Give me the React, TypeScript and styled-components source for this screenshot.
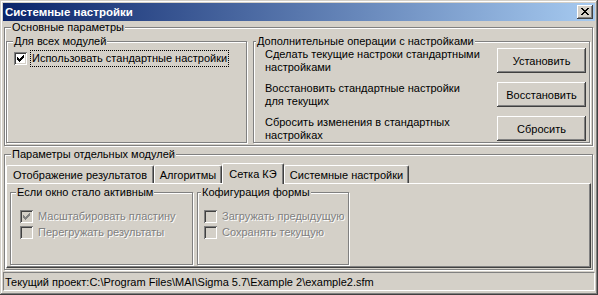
import React from "react";
import styled, { createGlobalStyle } from "styled-components";

const C = {
  face: "#D4D0C8",
  shadow: "#808080",
  dark: "#404040",
  light: "#FFFFFF",
};

const GlobalStyle = createGlobalStyle`
  html, body { margin: 0; padding: 0; background: #ffffff; }
  body { font-family: "Liberation Sans", Arial, sans-serif; font-size: 11px; color: #000; }
  * { box-sizing: border-box; }
`;

const Window = styled.div`
  width: 598px;
  height: 295px;
  padding: 3px;
  background: ${C.face};
  box-shadow: inset -1px -1px ${C.dark}, inset 1px 1px ${C.face},
    inset -2px -2px ${C.shadow}, inset 2px 2px ${C.light};
  display: flex;
  flex-direction: column;
`;

const TitleBar = styled.div`
  height: 18px;
  flex: none;
  display: flex;
  align-items: center;
  justify-content: space-between;
  padding: 0 2px 0 2px;
  background: linear-gradient(to right, #0a246a, #a6caf0);
`;

const TitleText = styled.span`
  color: #fff;
  font-weight: bold;
  font-size: 11.5px;
  line-height: 14px;
  white-space: nowrap;
`;

const CloseButton = styled.div`
  width: 16px;
  height: 14px;
  background: ${C.face};
  box-shadow: inset -1px -1px ${C.dark}, inset 1px 1px ${C.light},
    inset -2px -2px ${C.shadow}, inset 2px 2px ${C.face};
  svg { display: block; }
`;

const Body = styled.div`
  flex: 1;
  display: flex;
  flex-direction: column;
`;

const GroupBox = styled.div<{ $w?: number; $h: number; $mt: number; $ml?: number; $mr?: number }>`
  ${(p) => (p.$w ? `width: ${p.$w}px;` : "")}
  height: ${(p) => p.$h}px;
  margin: ${(p) => p.$mt}px ${(p) => p.$mr ?? 0}px 0 ${(p) => p.$ml ?? 0}px;
  flex: none;
  border: 1px solid ${C.shadow};
  box-shadow: inset 1px 1px ${C.light}, 1px 1px ${C.light};
  display: flex;
  flex-direction: column;
`;

const Legend = styled.div<{ $indent: number }>`
  align-self: flex-start;
  margin: -7px 0 0 ${(p) => p.$indent}px;
  padding: 0 1px;
  height: 13px;
  line-height: 13px;
  background: ${C.face};
  white-space: nowrap;
`;

const Row = styled.div<{ $mt?: number; $ml?: number }>`
  display: flex;
  margin: ${(p) => p.$mt ?? 0}px 0 0 ${(p) => p.$ml ?? 0}px;
`;

const CheckRow = styled.div<{ $mt?: number; $ml: number; $h: number }>`
  display: flex;
  align-items: center;
  height: ${(p) => p.$h}px;
  margin: ${(p) => p.$mt ?? 0}px 0 0 ${(p) => p.$ml}px;
`;

const Box = styled.span<{ $disabled?: boolean }>`
  width: 13px;
  height: 13px;
  flex: none;
  background: ${(p) => (p.$disabled ? C.face : C.light)};
  box-shadow: inset 1px 1px ${C.shadow}, inset -1px -1px ${C.light},
    inset 2px 2px ${C.dark}, inset -2px -2px ${C.face};
  svg { display: block; }
`;

const FocusLabel = styled.span`
  margin-left: 3px;
  padding: 0 1px;
  border: 1px dotted #000;
  line-height: 15px;
  white-space: nowrap;
`;

const DisabledLabel = styled.span`
  margin-left: 5px;
  color: ${C.shadow};
  text-shadow: 1px 1px ${C.light};
  line-height: 14px;
  white-space: nowrap;
`;

const OpRow = styled.div<{ $mt: number }>`
  display: flex;
  align-items: center;
  justify-content: space-between;
  height: 25px;
  margin-top: ${(p) => p.$mt}px;
  padding: 0 3px 0 11px;
`;

const OpText = styled.div`
  line-height: 13px;
  white-space: nowrap;
`;

const Button = styled.div`
  width: 89px;
  height: 25px;
  flex: none;
  display: flex;
  align-items: center;
  justify-content: center;
  background: ${C.face};
  box-shadow: inset -1px -1px ${C.dark}, inset 1px 1px ${C.light},
    inset -2px -2px ${C.shadow}, inset 2px 2px ${C.face};
  white-space: nowrap;
`;

const TabStrip = styled.div`
  display: flex;
  align-items: flex-end;
  height: 22px;
  margin-left: 1px;
`;

const Tab = styled.div<{ $w: number; $active?: boolean }>`
  width: ${(p) => p.$w}px;
  height: ${(p) => (p.$active ? 21 : 18)}px;
  margin-bottom: ${(p) => (p.$active ? -1 : 0)}px;
  position: relative;
  z-index: ${(p) => (p.$active ? 1 : 0)};
  flex: none;
  display: flex;
  align-items: center;
  justify-content: center;
  background: ${C.face};
  border-top: 1px solid ${C.light};
  border-left: 1px solid ${C.light};
  border-right: 1px solid ${C.dark};
  border-radius: 2px 2px 0 0;
  box-shadow: inset -1px 0 ${C.shadow};
  white-space: nowrap;
  line-height: 14px;
`;

const TabPanel = styled.div`
  width: 585px;
  height: 85px;
  margin-left: 1px;
  border-top: 1px solid ${C.light};
  border-left: 1px solid ${C.light};
  border-right: 1px solid ${C.dark};
  border-bottom: 1px solid ${C.dark};
  box-shadow: inset -1px -1px ${C.shadow};
  display: flex;
  padding-left: 3px;
`;

const StatusBar = styled.div`
  height: 19px;
  margin-top: 2px;
  flex: none;
  display: flex;
  align-items: center;
  padding: 1px 0 0 1px;
  border-top: 1px solid ${C.shadow};
  border-left: 1px solid ${C.shadow};
  border-bottom: 1px solid ${C.light};
  border-right: 1px solid ${C.light};
  white-space: nowrap;
`;

const xPixels: [number, number, number][] = [
  [0, 0, 2], [6, 0, 2],
  [1, 1, 2], [5, 1, 2],
  [2, 2, 4],
  [3, 3, 2],
  [2, 4, 4],
  [1, 5, 2], [5, 5, 2],
  [0, 6, 2], [6, 6, 2],
];
const xPath = xPixels.map(([x, y, w]) => `M${x + 4} ${y + 3}h${w}v1h-${w}z`).join("");

const checkCols: [number, number][] = [
  [3, 5], [4, 6], [5, 7], [6, 6], [7, 5], [8, 4], [9, 3],
];
const checkPath = checkCols.map(([x, y]) => `M${x} ${y}h1v3h-1z`).join("");

const CloseGlyph = () => (
  <svg width="16" height="14" viewBox="0 0 16 14" shapeRendering="crispEdges">
    <path d={xPath} fill="#000" />
  </svg>
);

const Check = ({ checked, disabled }: { checked?: boolean; disabled?: boolean }) => (
  <Box $disabled={disabled}>
    {checked && (
      <svg width="13" height="13" viewBox="0 0 13 13" shapeRendering="crispEdges">
        <path d={checkPath} fill={disabled ? C.shadow : "#000"} />
      </svg>
    )}
  </Box>
);

const ops = [
  { lines: ["Сделать текущие настроки стандартными", "настройками"], button: "Установить" },
  { lines: ["Восстановить стандартные настройки", "для текущих"], button: "Восстановить" },
  { lines: ["Сбросить изменения в стандартных", "настройках"], button: "Сбросить" },
];

const tabs = [
  { label: "Отображение результатов", w: 148 },
  { label: "Алгоритмы", w: 68 },
  { label: "Сетка КЭ", w: 62, active: true },
  { label: "Системные настройки", w: 125 },
];

export default function App() {
  return (
    <>
      <GlobalStyle />
      <Window>
        <TitleBar>
          <TitleText>Системные настройки</TitleText>
          <CloseButton>
            <CloseGlyph />
          </CloseButton>
        </TitleBar>
        <Body>
          <GroupBox $h={119} $mt={6} $ml={1} $mr={2}>
            <Legend $indent={6}>Основные параметры</Legend>
            <Row $ml={1}>
              <GroupBox $w={241} $h={102} $mt={7}>
                <Legend $indent={6}>Для всех модулей</Legend>
                <CheckRow $mt={2} $ml={7} $h={17}>
                  <Check checked />
                  <FocusLabel>Использовать стандартные настройки</FocusLabel>
                </CheckRow>
              </GroupBox>
              <GroupBox $w={337} $h={102} $mt={7} $ml={6}>
                <Legend $indent={2}>Дополнительные операции с настройками</Legend>
                {ops.map((op, i) => (
                  <OpRow key={op.button} $mt={i === 0 ? 0 : 9}>
                    <OpText>
                      {op.lines.map((l) => (
                        <div key={l}>{l}</div>
                      ))}
                    </OpText>
                    <Button>{op.button}</Button>
                  </OpRow>
                ))}
              </GroupBox>
            </Row>
          </GroupBox>

          <GroupBox $h={116} $mt={8} $ml={1} $mr={2}>
            <Legend $indent={6}>Параметры отдельных модулей</Legend>
            <TabStrip>
              {tabs.map((t) => (
                <Tab key={t.label} $w={t.w} $active={t.active}>
                  {t.label}
                </Tab>
              ))}
            </TabStrip>
            <TabPanel>
              <GroupBox $w={183} $h={73} $mt={8}>
                <Legend $indent={5}>Если окно стало активным</Legend>
                <CheckRow $mt={9} $ml={9} $h={16}>
                  <Check checked disabled />
                  <DisabledLabel>Масштабировать пластину</DisabledLabel>
                </CheckRow>
                <CheckRow $ml={9} $h={16}>
                  <Check disabled />
                  <DisabledLabel>Перегружать результаты</DisabledLabel>
                </CheckRow>
              </GroupBox>
              <GroupBox $w={152} $h={73} $mt={8} $ml={4}>
                <Legend $indent={3}>Кофигурация формы</Legend>
                <CheckRow $mt={9} $ml={6} $h={16}>
                  <Check disabled />
                  <DisabledLabel>Загружать предыдущую</DisabledLabel>
                </CheckRow>
                <CheckRow $ml={6} $h={16}>
                  <Check disabled />
                  <DisabledLabel>Сохранять текущую</DisabledLabel>
                </CheckRow>
              </GroupBox>
            </TabPanel>
          </GroupBox>

          <StatusBar>{"Текущий проект:C:\\Program Files\\MAI\\Sigma 5.7\\Example 2\\example2.sfm"}</StatusBar>
        </Body>
      </Window>
    </>
  );
}
